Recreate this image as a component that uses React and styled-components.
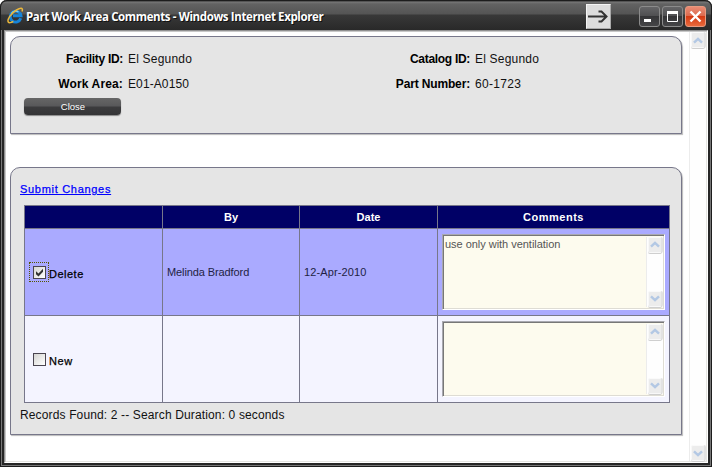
import React from "react";
import styled, { createGlobalStyle } from "styled-components";

const Global = createGlobalStyle`
  * { box-sizing: border-box; }
  body { margin: 0; background: #fff; font-family: "Liberation Sans", Arial, sans-serif; }
`;
const Window = styled.div`
  width: 712px; height: 467px; overflow: hidden;
  display: flex; flex-direction: column;
  background: #262626;
  border-radius: 7px 7px 0 0;
  box-shadow: inset 1px 0 #1c1c1c, inset -1px 0 #1c1c1c, inset 0 -1px #1c1c1c, inset 2px 0 #777, inset -2px 0 #777, inset 0 -2px #777;
`;
const TitleBar = styled.header`
  height: 30px; flex: none;
  display: flex; align-items: flex-start;
  padding: 0 5px 0 6px;
  border: solid #1c1c1c; border-width: 1px 1px 0; border-radius: 7px 7px 0 0;
  background: linear-gradient(#333 0, #777 1px, #626262 3px, #545454 13px, #383838 14px, #292929 100%);
`;
const Logo = styled.svg`width: 17px; height: 17px; margin-top: 6px; flex: none;`;
const Title = styled.h1`
  margin: 7px 0 0 2px; flex: 1;
  font: 700 11.5px/17px "Open Sans", sans-serif;
  letter-spacing: ${p => p.$ls}px; color: #fff; white-space: nowrap;
  text-shadow: 1px 1px #111;
`;
const ArrowBox = styled.div`
  width: 25px; height: 25px; margin: 3px 28px 0 0; background: #dcdcdc;
  border: 1px solid; border-color: #f4f4f4 #aaa #aaa #f4f4f4;
  svg { display: block; }
`;
const WinButton = styled.div`
  width: 21px; height: 21px; margin: 5px 0 0 ${p => p.$gap}px; border-radius: 3px;
  border: 1px solid ${p => (p.$close ? "#e89a80" : "#8b8b8b")};
  background: ${p => (p.$close
    ? "linear-gradient(#e98b74 0, #dd6c50 45%, #d43a13 50%, #ea6a3c 100%)"
    : "linear-gradient(#656567 0, #505052 45%, #353537 50%, #454547 100%)")};
  svg { display: block; }
`;
const Viewport = styled.div`
  flex: 1; min-height: 0; margin: 0 4px 4px 4px;
  display: flex; background: #fff;
  border: 1px solid; border-color: #909090 #fff #fff #909090;
  box-shadow: inset 1px 1px #c8c8c8, inset -1px -1px #e4e4e0;
`;
const Page = styled.main`flex: 1; padding: 5px 0 0 5px;`;
const Panel = styled.section`
  width: 672px; height: ${p => p.$h}px; margin-bottom: 33px;
  border: 1px solid #77778a; border-radius: 10px 10px 0 0;
  background: #e5e5e5; box-shadow: 1px 1px 1px #bbb;
`;
const Details = styled.dl`
  margin: 0; padding-top: 10px;
  display: grid; grid-template-columns: 112px 234px 113px 1fr;
  grid-auto-rows: 25px;
  font-size: 12px; line-height: 25px; color: #000; white-space: nowrap;
`;
const Term = styled.dt`font-weight: 700; text-align: right; letter-spacing: ${p => p.$ls || 0}px;`;
const Value = styled.dd`margin: 0; padding-left: 5px; letter-spacing: ${p => p.$ls || 0}px; color: #111;`;
const CloseButton = styled.button`
  display: block; width: 97px; height: 17px; margin: 1px 0 0 13px; padding: 0 0 1px 1px;
  border: 0; border-radius: 4px; color: #fff;
  font: 9.5px/15px "Liberation Sans", Arial, sans-serif;
  background: linear-gradient(#666 0, #59595b 45%, #3b3b3d 55%, #343436 100%);
  box-shadow: 0 1px 1px #888;
`;
const SubmitLink = styled.a`
  display: block; width: max-content; margin: 15px 0 0 9px;
  font-size: 11px; line-height: 13px; letter-spacing: 0.7px;
  color: #00f; text-decoration: underline; text-underline-offset: 1px;
  -webkit-text-stroke: 0.25px #00f;
`;
const Table = styled.div`
  margin: 9px 0 0 13px; width: 646px;
  display: grid; grid-template-columns: 137px 136px 137px 231px; grid-template-rows: 22px 86px 86px;
  gap: 1px; padding: 1px; background: #77778a;
`;
const Head = styled.div`
  background: #000066; color: #fff; font-size: 11px; font-weight: 700; letter-spacing: ${p => p.$ls || 0}px;
  line-height: 22px; text-align: center;
`;
const Cell = styled.div`
  background: ${p => (p.$on ? "#aaaaff" : "#f4f4ff")};
  display: flex; align-items: center; padding-left: 4px;
  font-size: 11px; letter-spacing: ${p => p.$ls || 0}px; color: #221f44; white-space: nowrap;
`;
const Focus = styled.span`
  width: 20px; height: 20px; display: grid; place-items: center;
  border: 1px dotted ${p => (p.$on ? "#555500" : "transparent")};
`;
const Check = styled.span`
  width: 13px; height: 13px; border: 1px solid #4a4550;
  background: linear-gradient(135deg, #d5d5d2, #fff);
  svg { display: block; }
`;
const CheckLabel = styled.span`color: #000; margin-top: 3px; letter-spacing: ${p => p.$ls}px; -webkit-text-stroke: 0.25px #000;`;
const Comment = styled.div`
  width: 223px; height: 76px; display: flex; margin-top: -1px;
  border: 1px solid; border-color: #a9a9b0 #fff #fff #a9a9b0;
  box-shadow: inset 1px 1px #777, inset -1px -1px #dedcd4;
  background: #fdfbee; padding: 2px 1px 2px 2px;
`;
const CommentText = styled.div`flex: 1; padding: 1px 0 0; font-size: 11px; line-height: 13px; letter-spacing: -0.03px; color: #555;`;
const Track = styled.div`
  width: 17px; background: #fefefe; border-left: 1px solid #ececec;
  display: flex; flex-direction: column; justify-content: space-between; align-items: center;
  margin: ${p => (p.$page ? "1px 1px 1px 0" : "0")}; flex: none;
`;
const ScrollButton = styled.div`
  width: 14px; height: 16px; border-radius: 2px; background: #ececec;
  border: 1px solid; border-color: #fafafa #e2e2e2 #f8f8f8 #f8f8f8; box-shadow: 0 1px #cfcfcf, 1px 0 #e2e2e2;
  display: grid; place-items: center;
  svg { display: block; transform: ${p => (p.$down ? "rotate(180deg)" : "none")}; }
`;
const Status = styled.p`margin: 4px 0 0 9px; font-size: 12px; line-height: 17px; letter-spacing: 0.14px; color: #111;`;

const Chevron = ({ down }) => (
  <ScrollButton $down={down}>
    <svg width="10" height="7" viewBox="0 0 10 7"><path d="M1 5.7 5 1.9l4 3.8" fill="none" stroke="#b3c8e4" strokeWidth="2.5" /></svg>
  </ScrollButton>
);
const ScrollTrack = ({ page }) => <Track $page={page}><Chevron /><Chevron down /></Track>;

const RowCells = ({ on, label, ls, by, date, comment }) => (
  <>
    <Cell $on={on}>
      <Focus $on={on}>
        <Check>
          {on && <svg width="11" height="11" viewBox="0 0 11 11"><path d="M2 4.2v3L4.5 9.5 9 4.8v-3L4.5 6.5z" fill="#333" /></svg>}
        </Check>
      </Focus>
      <CheckLabel $ls={ls}>{label}</CheckLabel>
    </Cell>
    <Cell $on={on} $ls={-0.1}>{by}</Cell>
    <Cell $on={on} $ls={0.12}>{date}</Cell>
    <Cell $on={on}><Comment><CommentText>{comment}</CommentText><ScrollTrack /></Comment></Cell>
  </>
);

export default function App() {
  return (
    <>
      <Global />
      <Window>
        <TitleBar>
          <Logo viewBox="0 0 17 17">
            <path d="M13.8 11.3A5.4 5.4 0 1 1 14 8.7H6" fill="none" stroke="#1684d8" strokeWidth="2.9" />
            <path d="M4.3 6.8A4.8 4.8 0 0 1 11.5 5" fill="none" stroke="#7bd0fb" strokeWidth="1.2" />
            <path d="M15 4.5C16.5.5 13.5.5 9.5 3 4 6.3-.2 12.5 1.3 15c.8 1.3 3 .6 5-.7" fill="none" stroke="#e9b73c" strokeWidth="1.5" />
          </Logo>
          <Title $ls={-0.38}>Part Work Area Comments - Windows Internet Explorer</Title>
          <ArrowBox>
            <svg width="23" height="23" viewBox="0 0 23 23"><path d="M1 11.5h18M11.5 6.5h3l5 5-5 5h-3" fill="none" stroke="#333" strokeWidth="2" /></svg>
          </ArrowBox>
          <WinButton $gap={0}><svg width="19" height="19"><path d="M4 12h7v3H4z" fill="#fff" /></svg></WinButton>
          <WinButton $gap={2}><svg width="19" height="19"><path d="M4.5 5.5h10v9h-10z" fill="none" stroke="#fff" /><path d="M4 4h11v3H4z" fill="#fff" /></svg></WinButton>
          <WinButton $gap={2} $close><svg width="19" height="19"><path d="m4.5 4.5 10 10m0-10-10 10" stroke="#fff" strokeWidth="2.4" /></svg></WinButton>
        </TitleBar>
        <Viewport>
          <Page>
            <Panel $h={98}>
              <Details>
                <Term $ls={-0.3}>Facility ID:</Term><Value $ls={0.2}>El Segundo</Value>
                <Term $ls={-0.3}>Catalog ID:</Term><Value $ls={0.2}>El Segundo</Value>
                <Term $ls={0.15}>Work Area:</Term><Value $ls={0.1}>E01-A0150</Value>
                <Term $ls={-0.15}>Part Number:</Term><Value $ls={0.3}>60-1723</Value>
              </Details>
              <CloseButton>Close</CloseButton>
            </Panel>
            <Panel $h={268}>
              <SubmitLink href="#">Submit Changes</SubmitLink>
              <Table>
                <Head /><Head>By</Head><Head>Date</Head><Head $ls={0.5}>Comments</Head>
                <RowCells on label="Delete" ls={0.5} by="Melinda Bradford" date="12-Apr-2010" comment="use only with ventilation" />
                <RowCells label="New" ls={0.6} />
              </Table>
              <Status>Records Found: 2 -- Search Duration: 0 seconds</Status>
            </Panel>
          </Page>
          <ScrollTrack page />
        </Viewport>
      </Window>
    </>
  );
}
